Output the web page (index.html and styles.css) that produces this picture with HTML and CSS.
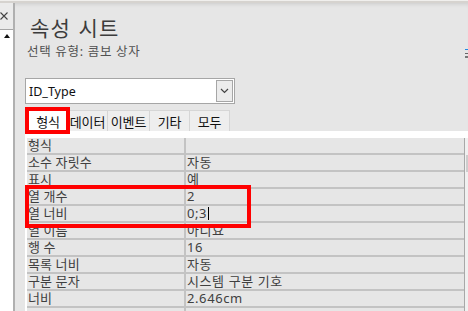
FILE: index.html
```html
<!DOCTYPE html>
<html lang="ko">
    <head>
        <meta charset="utf-8">
        <title>속성 시트</title>
        <link rel="stylesheet" href="styles.css">
    </head>
    <body>
        <div class="topbar"></div>
        <div class="app">
            <aside class="side">
                <div class="close">
                    <svg width="9" height="9" viewBox="0 0 9 9"><path d="M0.5 0.5l7 7M7.5 0.5l-7 7" stroke="#444" stroke-width="1.1" fill="none"/></svg>
                </div>
                <div class="list">
                    <div class="up"><span class="arrow"></span></div>
                </div>
            </aside>

            <main class="sheet">
                <h1 class="title">속성 시트</h1>
                <p class="subtitle">선택 유형: 콤보 상자</p>

                <div class="combo">
                    <span class="combo-text">ID_Type</span>
                    <span class="combo-btn">
                        <svg width="9" height="6" viewBox="0 0 9 6"><path d="M1 1l3.5 3.5L8 1" fill="none" stroke="#444" stroke-width="1.2"/></svg>
                    </span>
                </div>

                <nav class="tabs">
                    <span class="tab active">형식</span>
                    <span class="tab w-data">데이터</span>
                    <span class="tab w-event">이벤트</span>
                    <span class="tab w-etc">기타</span>
                    <span class="tab w-all">모두</span>
                </nav>

                <div class="grid-wrap">
                    <div class="grid">
                        <div class="row"><span class="name">형식</span><span class="value"></span></div>
                        <div class="row"><span class="name">소수 자릿수</span><span class="value">자동</span></div>
                        <div class="row"><span class="name">표시</span><span class="value">예</span></div>
                        <div class="marked">
                            <div class="row"><span class="name">열 개수</span><span class="value">2</span></div>
                            <div class="row"><span class="name">열 너비</span><span class="value">0;3<i class="caret"></i></span></div>
                        </div>
                        <div class="row"><span class="name">열 이름</span><span class="value">아니요</span></div>
                        <div class="row"><span class="name">행 수</span><span class="value">16</span></div>
                        <div class="row"><span class="name">목록 너비</span><span class="value">자동</span></div>
                        <div class="row"><span class="name">구분 문자</span><span class="value">시스템 구분 기호</span></div>
                        <div class="row"><span class="name">너비</span><span class="value">2.646cm</span></div>
                        <div class="row"><span class="name"></span><span class="value"></span></div>
                    </div>
                    <div class="vscroll"><span class="thumb"></span></div>
                </div>

                <span class="peek"></span>
            </main>
        </div>
    </body>
</html>
```

FILE: styles.css
```css
:root {
    --bg: #e6e6e6;
    --line: #c3c3c3;
    --border: #a6a6a6;
    --text: #404040;
    --red: #ff0000;
}

html,
body {
    margin: 0;
    width: 468px;
    height: 311px;
    overflow: hidden;
}

body {
    background: var(--bg);
    font-family: "Noto Sans", "Noto Sans CJK KR", sans-serif;
    color: var(--text);
}

.topbar {
    height: 3px;
    background: linear-gradient(#f0efed 0 1px, #d6d3cf 1px 3px);
}

.app {
    display: flex;
    height: 308px;
    box-shadow: inset 0 4px 4px -3px rgba(0, 0, 0, 0.12);
}

/* left collapsed pane */
.side {
    width: 13px;
    flex: none;
    display: flex;
    flex-direction: column;
    border-right: 2px solid #b0b0b0;
    background: #ebebeb;
}

.close {
    height: 26px;
    box-sizing: border-box;
    padding-top: 9px;
}

.close svg {
    display: block;
}

.list {
    flex: 1;
    background: #fff;
    border-top: 1px solid var(--border);
}

.up {
    height: 13px;
    display: flex;
    justify-content: center;
    padding-top: 4px;
    box-sizing: border-box;
}

.arrow {
    width: 0;
    height: 0;
    border-left: 3px solid transparent;
    border-right: 3px solid transparent;
    border-bottom: 4px solid #111;
}

/* property sheet */
.sheet {
    flex: 1;
    position: relative;
    padding-left: 10px;
}

.title {
    margin: 10px 0 0 5px;
    font-family: "Noto Sans CJK KR", sans-serif;
    font-weight: 400;
    font-size: 21px;
    line-height: 28px;
    letter-spacing: 1.3px;
    color: #3c3c3c;
}

.subtitle {
    margin: 3px 0 0 2px;
    font-size: 12.5px;
    line-height: 16px;
    letter-spacing: 0.7px;
    color: #505050;
}

.combo {
    margin-top: 18px;
    width: 210px;
    height: 26px;
    box-sizing: border-box;
    border: 1px solid var(--border);
    background: #fff;
    display: flex;
    align-items: center;
    justify-content: space-between;
    padding: 0 1px 0 3px;
}

.combo-text {
    font-size: 12.5px;
    color: #111;
}

.combo-btn {
    width: 17px;
    height: 22px;
    box-sizing: border-box;
    border: 1px solid var(--border);
    background: #ececec;
    display: flex;
    align-items: center;
    justify-content: center;
}

.tabs {
    margin-top: 3px;
    height: 24px;
    display: flex;
    align-items: flex-end;
    padding-left: 3px;
    font-family: "Noto Sans CJK KR", sans-serif;
    font-size: 13px;
    letter-spacing: -0.2px;
    color: #111;
}

.tab {
    height: 21px;
    box-sizing: border-box;
    display: flex;
    align-items: center;
    justify-content: center;
    background: #eeeeee;
    border: 1px solid #d6d6d6;
    border-bottom: 0;
    border-left: 0;
}

.tab.active {
    position: relative;
    width: 40px;
    height: 20px;
    background: #fff;
    border: 0;
    z-index: 1;
}

.tab.active::after {
    content: "";
    position: absolute;
    left: -3px;
    right: -2px;
    top: -4px;
    bottom: -3px;
    border: 4px solid var(--red);
}

.w-data { width: 40px; }
.w-event { width: 42px; }
.w-etc { width: 40px; }
.w-all { width: 40px; }

.grid-wrap {
    margin-top: 7px;
    display: flex;
    position: relative;
}

.grid-wrap::before {
    content: "";
    position: absolute;
    left: 0;
    right: 0;
    top: -7px;
    height: 7px;
    background: #fff;
}

.grid {
    flex: 1;
    border-left: 2px solid #fff;
    border-right: 1px solid #a8a8a8;
    font-size: 13px;
}

.row {
    display: grid;
    grid-template-columns: 159px 1fr;
    height: 17px;
    box-sizing: border-box;
    border-bottom: 2px solid var(--line);
    line-height: 15px;
}

.name {
    border-right: 2px solid var(--line);
    padding-left: 1px;
    letter-spacing: 0.1px;
    white-space: nowrap;
}

.value {
    padding-left: 1px;
    white-space: nowrap;
    letter-spacing: 0.6px;
}

.marked {
    position: relative;
}

.marked::after {
    content: "";
    position: absolute;
    left: -2px;
    top: -4px;
    width: 226px;
    height: 43px;
    box-sizing: border-box;
    border: 4px solid var(--red);
}

.caret {
    display: inline-block;
    width: 1px;
    height: 13px;
    margin-left: 1px;
    background: #000;
    vertical-align: -2px;
}

.vscroll {
    width: 3px;
    background: #f0f0f0;
    position: relative;
}

.thumb {
    position: absolute;
    left: 1px;
    right: 0;
    top: 17px;
    height: 17px;
    background: #cdcdcd;
}

.peek {
    position: absolute;
    left: 450px;
    top: 46px;
    width: 3px;
    height: 8px;
    border-top: 1px solid #1e88e5;
    background: linear-gradient(#e6e6e6 0 3px, #666 3px 4px, #e6e6e6 4px 6px, #777 6px 8px);
}
```
